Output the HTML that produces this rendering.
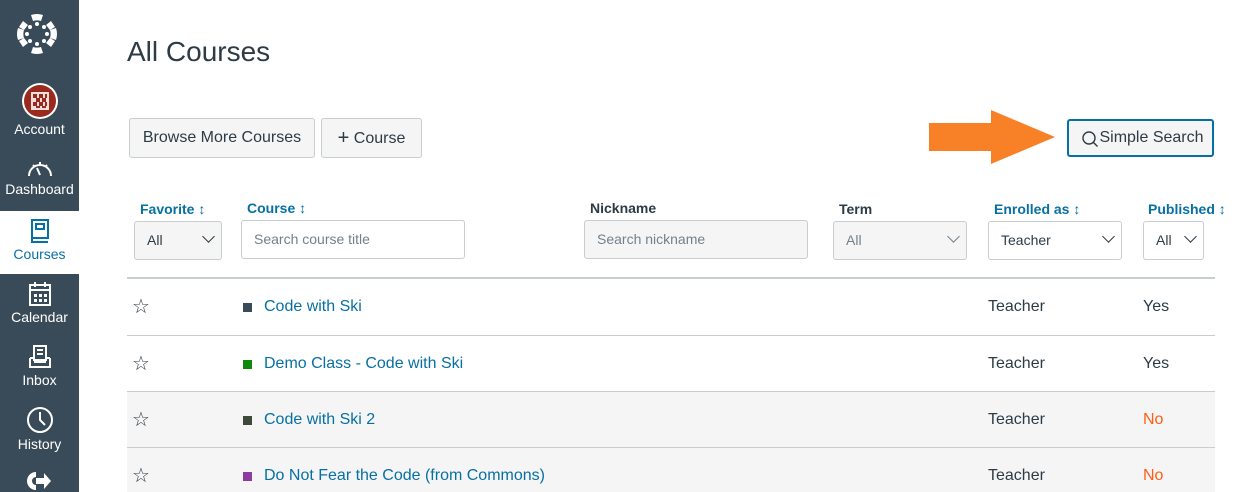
<!DOCTYPE html>
<html><head><meta charset="utf-8"><style>
*{box-sizing:border-box;margin:0;padding:0}
html,body{width:1260px;height:492px;overflow:hidden}
body{background:#fff;font-family:"Liberation Sans",sans-serif;color:#2d3b45;position:relative}
.a{position:absolute}
#nav{left:0;top:0;width:79px;height:492px;background:#394b58}
.ni{position:absolute;left:0;width:79px;text-align:center;color:#fff;font-size:14px}
.ni svg{display:block;margin:0 auto 2px}
.btn{position:absolute;background:#f5f5f5;border:1px solid #c7cdd1;border-radius:3px;font-size:16px;color:#2d3b45;text-align:center;line-height:38px}
.hd{position:absolute;font-size:14px;font-weight:bold;color:#0770a3}
.sel{position:absolute;height:39px;border:1px solid #c7cdd1;border-radius:3px;font-size:14px;line-height:37px;padding-left:12px;color:#2d3b45;background:#fff}
.sel.g{background:#f5f5f5;color:#73818c}
.chev{position:absolute;right:8px;width:9px;height:9px;border-right:1.3px solid #2d3b45;border-bottom:1.3px solid #2d3b45;transform:rotate(45deg);top:10px}
.row{position:absolute;left:127px;width:1088px;height:56px;border-top:1px solid #c7cdd1;font-size:16px}
.row span{position:absolute;top:19px}
.row .st{font-size:20px;top:15px;left:5px}
.sq{width:9px;height:9px;top:24px!important}
.lk{color:#0770a3}
</style></head><body>
<div id="nav" class="a">
<svg class="a" style="left:15px;top:12px" width="44" height="44" viewBox="0 0 44 44" fill="#fff">
<path d="M16 3a19 19 0 0 1 12 0l-2 6a13 13 0 0 0-8 0z"/>
<path d="M16 41a19 19 0 0 0 12 0l-2-6a13 13 0 0 1-8 0z"/>
<path d="M3 16a19 19 0 0 0 0 12l6-2a13 13 0 0 1 0-8z"/>
<path d="M41 16a19 19 0 0 1 0 12l-6-2a13 13 0 0 0 0-8z"/>
<path d="M8 9l5 4-4 5-5-3z"/><path d="M36 9l-5 4 4 5 5-3z"/><path d="M8 35l5-4-4-5-5 3z"/><path d="M36 35l-5-4 4-5 5 3z"/>
<circle cx="22" cy="12" r="2"/><circle cx="22" cy="32" r="2"/><circle cx="12" cy="22" r="2"/><circle cx="32" cy="22" r="2"/>
<circle cx="15" cy="15" r="2"/><circle cx="29" cy="15" r="2"/><circle cx="15" cy="29" r="2"/><circle cx="29" cy="29" r="2"/>
</svg>
<div class="ni" style="top:83px"><svg width="36" height="36" viewBox="0 0 36 36"><circle cx="18" cy="18" r="18" fill="#fff"/><circle cx="18" cy="18" r="16" fill="#9b2a1e"/><path d="M9 9h18v18H9z" fill="#fff" opacity=".85"/><path d="M11 11h4v4h-4zM17 11h4v4h-4zM23 11h2v4h-2zM14 15h4v4h-4zM20 15h4v4h-4zM11 19h4v4h-4zM17 19h4v4h-4zM23 19h2v4h-2zM14 23h4v2h-4zM20 23h4v2h-4z" fill="#9b2a1e"/></svg>Account</div>
<div class="ni" style="top:157px"><svg width="28" height="22" viewBox="0 0 28 22" fill="none" stroke="#fff" stroke-width="2"><path d="M3 19a11 11 0 1 1 22 0"/><path d="M14 18l-3-7"/><path d="M14 5v2M7 8l1 1M21 8l-1 1"/></svg>Dashboard</div>
<div class="a" style="left:0;top:211px;width:79px;height:63px;background:#fff"></div>
<div class="ni" style="top:218px;color:#0770a3"><svg width="22" height="26" viewBox="0 0 22 26" fill="none" stroke="#0770a3" stroke-width="2"><path d="M3 2h16v18H3z"/><path d="M7 6h8v5H7z"/><path d="M3 20v4h16"/></svg>Courses</div>
<div class="ni" style="top:281px"><svg width="24" height="26" viewBox="0 0 24 26" fill="none" stroke="#fff" stroke-width="2"><path d="M2 4h20v20H2zM2 9h20M7 1v5M17 1v5"/><path d="M6 13h3v3H6zM11 13h3v3h-3zM16 13h3v3h-3zM6 18h3v3H6zM11 18h3v3h-3zM16 18h3v3h-3z" fill="#fff" stroke="none"/></svg>Calendar</div>
<div class="ni" style="top:344px"><svg width="26" height="26" viewBox="0 0 26 26" fill="none" stroke="#fff" stroke-width="2"><path d="M7 2h12v14H7z"/><path d="M10 6h6M10 10h6"/><path d="M3 14v9h20v-9M3 14h4M19 14h4M7 18h12"/></svg>Inbox</div>
<div class="ni" style="top:406px"><svg width="28" height="28" viewBox="0 0 28 28" fill="none" stroke="#fff" stroke-width="2"><circle cx="14" cy="14" r="12"/><path d="M14 6v8l5 5"/></svg>History</div>
<svg class="a" style="left:24px;top:470px" width="28" height="22" viewBox="0 0 28 22" fill="#fff"><path d="M12 2a9 9 0 1 0 0 18v-5a4 4 0 1 1 0-8z"/><path d="M12 8h8V3l7 8-7 8v-5h-8z"/></svg>
</div>

<div class="a" style="left:127px;top:36px;font-size:28px;color:#2d3b45">All Courses</div>
<div class="btn" style="left:129px;top:118px;width:186px;height:40px">Browse More Courses</div>
<div class="btn" style="left:321px;top:118px;width:101px;height:40px"><span style="font-size:20px;font-weight:300;vertical-align:-1px">+</span> Course</div>

<svg class="a" style="left:928px;top:109px" width="130" height="56"><path d="M1 14h62V1l64 27-64 27V42H1z" fill="#f88128"/></svg>
<div class="btn" style="left:1067px;top:119px;width:147px;height:38px;border:2px solid #0770a3;line-height:34px;padding-left:22px">
<svg class="a" style="left:12px;top:9px" width="18" height="18" fill="none" stroke="#2d3b45" stroke-width="1.4"><circle cx="8" cy="8" r="6"/><path d="M12.5 12.5l4 4"/></svg>Simple Search</div>

<div class="hd" style="left:140px;top:201px">Favorite ↕</div>
<div class="hd" style="left:247px;top:200px">Course ↕</div>
<div class="hd" style="left:590px;top:200px;color:#2d3b45">Nickname</div>
<div class="hd" style="left:839px;top:201px;color:#2d3b45">Term</div>
<div class="hd" style="left:994px;top:201px">Enrolled as ↕</div>
<div class="hd" style="left:1148px;top:201px">Published ↕</div>

<div class="sel g" style="left:134px;top:221px;width:88px;color:#2d3b45">All<div class="chev"></div></div>
<div class="sel" style="left:241px;top:220px;width:224px;color:#73818c">Search course title</div>
<div class="sel g" style="left:584px;top:220px;width:224px">Search nickname</div>
<div class="sel g" style="left:833px;top:221px;width:134px">All<div class="chev" style="border-color:#73818c"></div></div>
<div class="sel" style="left:988px;top:221px;width:134px">Teacher<div class="chev"></div></div>
<div class="sel" style="left:1143px;top:221px;width:61px">All<div class="chev"></div></div>

<div class="a" style="left:127px;top:277px;width:1088px;height:2px;background:#c7cdd1"></div>
<div class="row" style="top:279px;border-top:none"><span class="st">☆</span><span class="sq" style="left:116px;background:#394b58"></span><span class="lk" style="left:137px">Code with Ski</span><span style="left:861px">Teacher</span><span style="left:1016px">Yes</span></div>
<div class="row" style="top:335px"><span class="st">☆</span><span class="sq" style="left:116px;background:#0b8a0b"></span><span class="lk" style="left:137px">Demo Class - Code with Ski</span><span style="left:861px">Teacher</span><span style="left:1016px">Yes</span></div>
<div class="row" style="top:391px;background:#f5f5f5"><span class="st">☆</span><span class="sq" style="left:116px;background:#3d4a3a"></span><span class="lk" style="left:137px">Code with Ski 2</span><span style="left:861px">Teacher</span><span style="left:1016px;color:#fc5e13">No</span></div>
<div class="row" style="top:447px;background:#f5f5f5"><span class="st">☆</span><span class="sq" style="left:116px;background:#8e3ba0"></span><span class="lk" style="left:137px">Do Not Fear the Code (from Commons)</span><span style="left:861px">Teacher</span><span style="left:1016px;color:#fc5e13">No</span></div>
</body></html>
